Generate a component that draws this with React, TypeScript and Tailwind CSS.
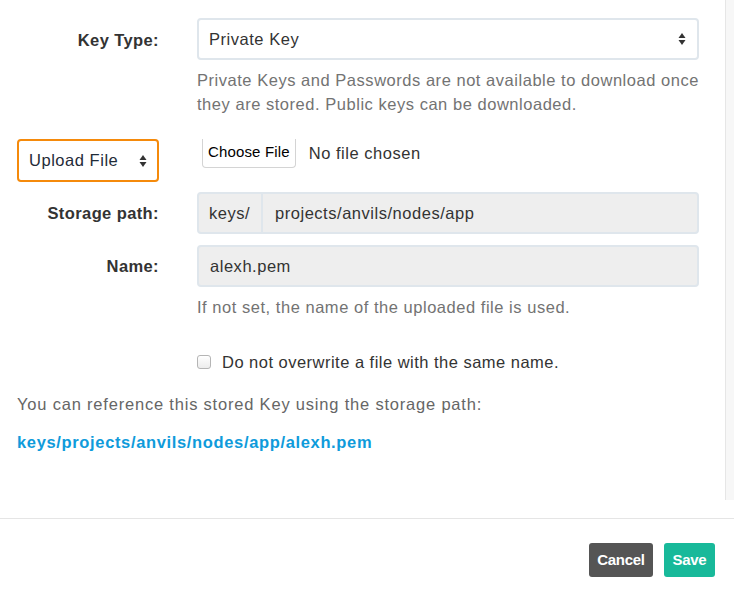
const FONT = { fontFamily: '"Liberation Sans", Arial, sans-serif' }

function Arrows() {
  return (
    <svg width="8" height="14" viewBox="0 0 8 14" aria-hidden>
      <path d="M4 1 L7.5 6 H0.5 Z" fill="#333" />
      <path d="M4 13 L7.5 8 H0.5 Z" fill="#333" />
    </svg>
  )
}

export default function App() {
  return (
    <div
      className="h-[591px] w-[734px] overflow-hidden bg-white text-[16.5px] tracking-[0.53px] text-[#333]"
      style={FONT}
    >
      {/* Body with scroll track */}
      <div className="flex h-[500px]">
        <div className="flex-1 pl-[17px] pr-[26px] pt-[18px]">
          {/* Key type */}
          <div className="grid grid-cols-[142px_1fr] gap-x-[38px]">
            <label className="flex h-[42px] items-center justify-end pt-[2px] font-bold tracking-[0.4px]">Key Type:</label>
            <div>
              <div className="flex h-[42px] items-center justify-between rounded-[4px] border-2 border-[#dfe6ec] pl-[10px] pr-[11px]">
                <span>Private Key</span>
                <Arrows />
              </div>
              <p className="mt-[8px] leading-[24px] text-[#737373]">
                Private Keys and Passwords are not available to download once they are stored. Public keys can be
                downloaded.
              </p>
            </div>
          </div>

          {/* Upload */}
          <div className="mt-[23px] grid grid-cols-[142px_1fr] gap-x-[38px]">
            <div className="flex h-[43px] items-center justify-between rounded-[4px] border-2 border-[#f58a0b] pl-[10px] pr-[10px] text-[#1f2b38]">
              <span>Upload File</span>
              <Arrows />
            </div>
            <div className="flex h-[28px] items-center gap-[13px] pl-[5px]">
              <span className="flex h-[29px] items-center rounded-b-[4px] border-x border-b border-[#d4d4d4] px-[5px] text-[15px] tracking-[0.15px] text-black">
                Choose File
              </span>
              <span>No file chosen</span>
            </div>
          </div>

          {/* Storage path */}
          <div className="mt-[10px] grid grid-cols-[142px_1fr] gap-x-[38px]">
            <label className="flex h-[42px] items-center justify-end font-bold tracking-[0.4px]">Storage path:</label>
            <div className="flex h-[42px] overflow-hidden rounded-[4px] border-2 border-[#dfe6ec] bg-[#eeeeee]">
              <span className="flex w-[64px] items-center border-r-2 border-[#dfe6ec] pl-[10px]">keys/</span>
              <span className="flex items-center pl-[12px]">projects/anvils/nodes/app</span>
            </div>
          </div>

          {/* Name */}
          <div className="mt-[11px] grid grid-cols-[142px_1fr] gap-x-[38px]">
            <label className="flex h-[42px] items-center justify-end font-bold tracking-[0.4px]">Name:</label>
            <div>
              <div className="flex h-[42px] items-center rounded-[4px] border-2 border-[#dfe6ec] bg-[#eeeeee] pl-[11px]">
                alexh.pem
              </div>
              <p className="mt-[8px] leading-[24px] text-[#737373]">If not set, the name of the uploaded file is used.</p>
            </div>
          </div>

          {/* Checkbox */}
          <div className="mt-[31px] grid grid-cols-[142px_1fr] gap-x-[38px]">
            <div />
            <label className="flex items-center gap-[11px]">
              <span className="h-[14px] w-[14px] rounded-[3px] border border-[#b5b5b5] bg-gradient-to-b from-white to-[#ececec]" />
              <span className="tracking-[0.48px]">Do not overwrite a file with the same name.</span>
            </label>
          </div>

          <p className="mt-[17px] leading-[24px] tracking-[0.8px] text-[#666]">
            You can reference this stored Key using the storage path:
          </p>
          <p className="mt-[14px] font-bold leading-[24px] tracking-[0.65px] text-[#0f9bdb]">
            keys/projects/anvils/nodes/app/alexh.pem
          </p>
        </div>
        <div className="w-[9px] border-l border-[#e6e6e6] bg-[#f7f7f7]" />
      </div>

      {/* Footer */}
      <div className="mt-[18px] flex justify-end gap-[11px] border-t border-[#e5e5e5] pr-[19px] pt-[24px]">
        <button className="flex h-[34px] w-[64px] items-center justify-center rounded-[3px] bg-[#555555] text-[15px] font-bold tracking-[-0.3px] text-white">
          Cancel
        </button>
        <button className="flex h-[34px] w-[51px] items-center justify-center rounded-[3px] bg-[#18b99a] text-[15px] font-bold tracking-[-0.3px] text-white">
          Save
        </button>
      </div>
    </div>
  )
}
